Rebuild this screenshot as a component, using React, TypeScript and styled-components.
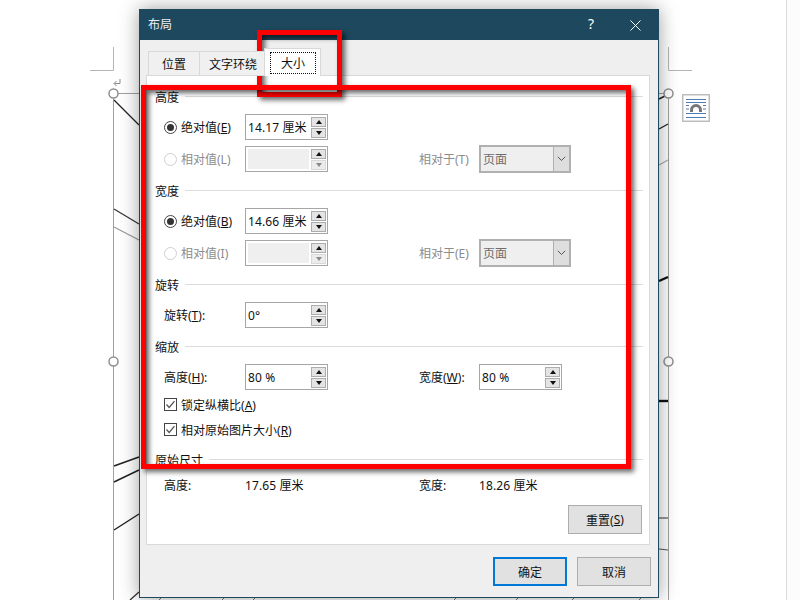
import React from "react";
import styled, { createGlobalStyle } from "styled-components";

const Global = createGlobalStyle`
  html, body { margin: 0; padding: 0; background: #fff; overflow: hidden; }
  body { font-family: "Noto Sans", "Noto Sans CJK SC", sans-serif; font-size: 12px; }
`;

const Stage = styled.div`
  position: relative;
  width: 800px;
  height: 600px;
  overflow: hidden;
  background: #fff;
`;

const DocDrawing = styled.svg`
  position: absolute;
  left: 0;
  top: 0;
`;

const WrapIcon = styled.svg`
  position: absolute;
  left: 682px;
  top: 94px;
`;

const Dialog = styled.div`
  position: absolute;
  left: 139px;
  top: 9px;
  width: 520px;
  height: 589px;
  box-sizing: border-box;
  border: 1px solid #1e485e;
  background: #efefef;
  box-shadow: 0 0 18px rgba(0, 0, 0, 0.38);
  display: flex;
  flex-direction: column;
  color: #111;
`;

const TitleBar = styled.div`
  height: 30px;
  flex: none;
  background: #1e485e;
  color: #e9eef1;
  display: flex;
  align-items: center;
  padding: 0 17px 0 8px;
  font-size: 12px;
`;

const TitleText = styled.span`
  flex: 1;
  padding-bottom: 2px;
`;

const HelpGlyph = styled.span`
  font-size: 14px;
  color: #fff;
  margin-right: 36px;
  padding-bottom: 3px;
`;

const TabStrip = styled.div`
  height: 28px;
  margin-top: 8px;
  padding-left: 8px;
  display: flex;
  align-items: flex-end;
  position: relative;
  z-index: 1;
  flex: none;
`;

const Tab = styled.div<{ $w: number; $active?: boolean; $shift?: number }>`
  width: ${(p) => p.$w}px;
  height: ${(p) => (p.$active ? 28 : 25)}px;
  box-sizing: border-box;
  border: 1px solid #d9d9d9;
  border-right-width: ${(p) => (p.$active ? 1 : 0)}px;
  border-bottom: ${(p) => (p.$active ? "none" : "1px solid #d9d9d9")};
  background: ${(p) => (p.$active ? "#fff" : "#f0f0f0")};
  display: flex;
  align-items: center;
  justify-content: center;
  white-space: nowrap;
  padding-top: 1px;
  padding-left: ${(p) => p.$shift ?? 0}px;
`;

const TabFocus = styled.span`
  width: 46px;
  height: 22px;
  box-sizing: border-box;
  border: 1px dotted #111;
  padding-left: 1px;
  display: flex;
  align-items: center;
  justify-content: center;
`;

const Panel = styled.div`
  margin: -1px 8px 0 6px;
  height: 470px;
  flex: none;
  box-sizing: border-box;
  border: 1px solid #d9d9d9;
  background: #fff;
  padding: 12px 6px 0 8px;
  display: flex;
  flex-direction: column;
`;

const Heading = styled.div<{ $top?: number }>`
  height: 16px;
  line-height: 16px;
  margin-top: ${(p) => p.$top ?? 0}px;
  padding-top: 3px;
  box-sizing: border-box;
  display: flex;
  align-items: center;
  gap: 6px;
  flex: none;
  &::after {
    content: "";
    flex: 1;
    height: 1px;
    background: #dcdcdc;
    margin-top: -2px;
  }
`;

const Row = styled.div<{ $top: number; $h?: number }>`
  margin-top: ${(p) => p.$top}px;
  height: ${(p) => p.$h ?? 26}px;
  padding-left: 9px;
  display: grid;
  grid-template-columns: 81px 174px 60px 1fr;
  align-items: center;
  flex: none;
`;

const Label = styled.div<{ $disabled?: boolean }>`
  display: flex;
  align-items: center;
  gap: 4px;
  white-space: nowrap;
  color: ${(p) => (p.$disabled ? "#8c8c8c" : "#111")};
`;

const CheckText = styled.span`
  padding-top: 2px;
`;

const Key = styled.span`
  text-decoration: underline;
`;

const Radio = styled.span<{ $disabled?: boolean; $on?: boolean }>`
  width: 13px;
  height: 13px;
  box-sizing: border-box;
  border-radius: 50%;
  border: 1px solid ${(p) => (p.$disabled ? "#cfcfcf" : "#444")};
  display: flex;
  align-items: center;
  justify-content: center;
  &::after {
    content: "";
    display: ${(p) => (p.$on ? "block" : "none")};
    width: 7px;
    height: 7px;
    border-radius: 50%;
    background: #333;
  }
`;

const CheckBox = styled.svg`
  flex: none;
`;

const SpinBox = styled.div<{ $disabled?: boolean }>`
  width: 83px;
  height: 26px;
  box-sizing: border-box;
  border: 1px solid #a6a6a6;
  background: #fff;
  display: flex;
  align-items: center;
  padding: ${(p) => (p.$disabled ? "2px" : "1px")} 1px ${(p) => (p.$disabled ? "2px" : "1px")} 2px;
`;

const SpinValue = styled.div<{ $disabled?: boolean }>`
  flex: 1;
  align-self: stretch;
  display: flex;
  align-items: center;
  white-space: nowrap;
  letter-spacing: 0.1px;
  background: ${(p) => (p.$disabled ? "#efefef" : "transparent")};
  margin-right: 2px;
`;

const SpinButtons = styled.div`
  width: 15px;
  flex: none;
  align-self: center;
  display: flex;
  flex-direction: column;
  gap: 1px;
`;

const SpinButton = styled.div<{ $faint?: boolean }>`
  height: 10px;
  box-sizing: border-box;
  border: 1px solid ${(p) => (p.$faint ? "#d9d9d9" : "#adadad")};
  background: ${(p) => (p.$faint ? "#ececec" : "#e4e4e4")};
  display: flex;
  align-items: center;
  justify-content: center;
`;

const Arrow = styled.span<{ $down?: boolean; $faint?: boolean }>`
  width: 0;
  height: 0;
  border-left: 3.5px solid transparent;
  border-right: 3.5px solid transparent;
  ${(p) =>
    p.$down
      ? `border-top: 4px solid ${p.$faint ? "#8a8a8a" : "#111"};`
      : `border-bottom: 4px solid #111;`}
`;

const SelectBox = styled.div`
  width: 92px;
  height: 28px;
  box-sizing: border-box;
  border: 2px solid #b0b0b0;
  background: #efefef;
  display: flex;
  align-items: center;
  color: #6d6d6d;
`;

const SelectText = styled.div`
  flex: 1;
  padding-left: 2px;
  padding-bottom: 1px;
`;

const SelectButton = styled.div`
  width: 16px;
  align-self: stretch;
  box-sizing: border-box;
  border-left: 1px solid #b0b0b0;
  background: #dedede;
  display: flex;
  align-items: center;
  justify-content: center;
`;

const PanelFooter = styled.div`
  margin-top: 13px;
  margin-right: 1px;
  display: flex;
  justify-content: flex-end;
  flex: none;
`;

const Button = styled.div<{ $primary?: boolean }>`
  width: 74px;
  height: 29px;
  box-sizing: border-box;
  border: ${(p) => (p.$primary ? "2px solid #0078d7" : "1px solid #adadad")};
  background: #e1e1e1;
  display: flex;
  align-items: center;
  justify-content: center;
`;

const Footer = styled.div`
  margin-top: 12px;
  padding-right: 7px;
  display: flex;
  justify-content: flex-end;
  gap: 10px;
  flex: none;
`;

const Plain = styled.div`
  letter-spacing: 0.1px;
`;

const Annotation = styled.div<{ $x: number; $y: number; $w: number; $h: number }>`
  position: absolute;
  left: ${(p) => p.$x}px;
  top: ${(p) => p.$y}px;
  width: ${(p) => p.$w}px;
  height: ${(p) => p.$h}px;
  box-sizing: border-box;
  border: 5px solid #fe0000;
  box-shadow: 3px 3px 5px rgba(0, 0, 0, 0.6), inset 3px 3px 5px rgba(0, 0, 0, 0.6);
`;

const Spin = ({ value, disabled }: { value?: string; disabled?: boolean }) => (
  <SpinBox $disabled={disabled}>
    <SpinValue $disabled={disabled}>{value}</SpinValue>
    <SpinButtons>
      <SpinButton><Arrow /></SpinButton>
      <SpinButton $faint={disabled}><Arrow $down $faint={disabled} /></SpinButton>
    </SpinButtons>
  </SpinBox>
);

const Select = () => (
  <SelectBox>
    <SelectText>页面</SelectText>
    <SelectButton>
      <svg width="9" height="6" viewBox="0 0 9 6">
        <path d="M0.8 0.8 L4.5 4.5 L8.2 0.8" fill="none" stroke="#555" strokeWidth="1" />
      </svg>
    </SelectButton>
  </SelectBox>
);

const Check = ({ label, k }: { label: string; k: string }) => (
  <Label>
    <CheckBox width="13" height="13" viewBox="0 0 13 13">
      <rect x="0.5" y="0.5" width="12" height="12" fill="#fff" stroke="#444" />
      <path d="M2.5 6.5 L5.2 9.4 L10.5 3.2" fill="none" stroke="#555" strokeWidth="1.3" />
    </CheckBox>
    <CheckText>{label}(<Key>{k}</Key>)</CheckText>
  </Label>
);

const SizeRows = ({ abs, absKey, val, relKey, toKey, top }: { abs: string; absKey: string; val: string; relKey: string; toKey: string; top: number }) => (
  <>
    <Row $top={top}>
      <Label><Radio $on /><span>{abs}(<Key>{absKey}</Key>)</span></Label>
      <Spin value={val} />
    </Row>
    <Row $top={5}>
      <Label $disabled><Radio $disabled /><span>相对值({relKey})</span></Label>
      <Spin disabled />
      <Label $disabled>相对于({toKey})</Label>
      <Select />
    </Row>
  </>
);

const lines: [number, number, number, number, string, number][] = [
  [114, 100, 139, 125, "#222", 1.3],
  [114, 209, 139, 224, "#333", 1.2],
  [114, 227, 139, 240, "#999", 1.2],
  [114, 466, 139, 457, "#222", 1.6],
  [114, 482, 139, 470, "#222", 1.4],
  [114, 530, 139, 514, "#222", 1.4],
  [130, 600, 139, 592, "#333", 1.3],
  [659, 99, 665, 96, "#222", 1.5],
  [659, 129, 668, 124, "#222", 1.3],
  [659, 165, 668, 160, "#aaa", 1.2],
  [659, 281, 668, 277, "#111", 2.4],
  [659, 401, 668, 401, "#111", 2.4],
  [659, 518, 668, 518, "#333", 1],
  [659, 549, 668, 550, "#555", 1],
];

const ticks = [160, 223, 254, 455, 517, 573, 640];

export default function App() {
  return (
    <Stage>
      <Global />
      <DocDrawing width="800" height="600" viewBox="0 0 800 600">
        <rect x="787" y="0" width="13" height="600" fill="#fcfcfc" />
        <path d="M786.5 0 V600" stroke="#dcdcdc" />
        <path d="M113.5 47 V70.5 H90 M668.5 47 V70.5 H692" fill="none" stroke="#b5b5b5" />
        <path d="M120 79 V83.5 H114.5 M116.5 81 L114 83.5 L116.5 86" fill="none" stroke="#8a8a8a" />
        <path d="M113.5 600 V93.5 H668.5 V600" fill="none" stroke="#a0a0a0" />
        {lines.map(([a, b, c, d, s, w], i) => (
          <line key={i} x1={a} y1={b} x2={c} y2={d} stroke={s} strokeWidth={w} />
        ))}
        {ticks.map((x) => (
          <line key={x} x1={x - 1} y1={600} x2={x + 1} y2={598} stroke="#777" />
        ))}
        {[[113.5, 93.5], [668.5, 93.5], [113.5, 361.5], [668.5, 361.5]].map(([x, y], i) => (
          <circle key={i} cx={x} cy={y} r="4.5" fill="#fff" stroke="#8f8f8f" strokeWidth="1.5" />
        ))}
      </DocDrawing>
      <WrapIcon width="28" height="28" viewBox="0 0 28 28">
        <rect x="0.75" y="0.75" width="26.5" height="26.5" fill="#fff" stroke="#bdbdbd" strokeWidth="1.5" />
        <path d="M4 5.5 H24 M4 8.5 H24 M4 11.5 H7 M21 11.5 H24 M4 15 H7 M21 15 H24 M4 19.5 H24 M4 23.5 H24" stroke="#4a7eb4" strokeWidth="1" />
        <path d="M9.5 18 V16 A4.5 4.5 0 0 1 18.5 16 V18" fill="none" stroke="#777" strokeWidth="3" />
      </WrapIcon>

      <Dialog>
        <TitleBar>
          <TitleText>布局</TitleText>
          <HelpGlyph>?</HelpGlyph>
          <svg width="11" height="11" viewBox="0 0 11 11">
            <path d="M0.5 0.5 L10.5 10.5 M10.5 0.5 L0.5 10.5" stroke="#fff" strokeWidth="1" />
          </svg>
        </TitleBar>
        <TabStrip>
          <Tab $w={51}>位置</Tab>
          <Tab $w={65} $shift={2}>文字环绕</Tab>
          <Tab $w={57} $active><TabFocus>大小</TabFocus></Tab>
        </TabStrip>
        <Panel>
          <Heading>高度</Heading>
          <SizeRows abs="绝对值" absKey="E" val="14.17 厘米" relKey="L" toKey="T" top={10} />
          <Heading $top={11}>宽度</Heading>
          <SizeRows abs="绝对值" absKey="B" val="14.66 厘米" relKey="I" toKey="E" top={10} />
          <Heading $top={11}>旋转</Heading>
          <Row $top={10}>
            <Label><span>旋转(<Key>T</Key>):</span></Label>
            <Spin value="0°" />
          </Row>
          <Heading $top={10}>缩放</Heading>
          <Row $top={10}>
            <Label><span>高度(<Key>H</Key>):</span></Label>
            <Spin value="80 %" />
            <Label><span>宽度(<Key>W</Key>):</span></Label>
            <Spin value="80 %" />
          </Row>
          <Row $top={4} $h={20}><Check label="锁定纵横比" k="A" /></Row>
          <Row $top={5} $h={20}><Check label="相对原始图片大小" k="R" /></Row>
          <Heading $top={12}>原始尺寸</Heading>
          <Row $top={9} $h={16}>
            <Label>高度:</Label>
            <Plain>17.65 厘米</Plain>
            <Label>宽度:</Label>
            <Plain>18.26 厘米</Plain>
          </Row>
          <PanelFooter>
            <Button>重置(<Key>S</Key>)</Button>
          </PanelFooter>
        </Panel>
        <Footer>
          <Button $primary>确定</Button>
          <Button>取消</Button>
        </Footer>
      </Dialog>

      <Annotation $x={257} $y={30} $w={85} $h={67} />
      <Annotation $x={141} $y={85} $w={490} $h={384} />
    </Stage>
  );
}
